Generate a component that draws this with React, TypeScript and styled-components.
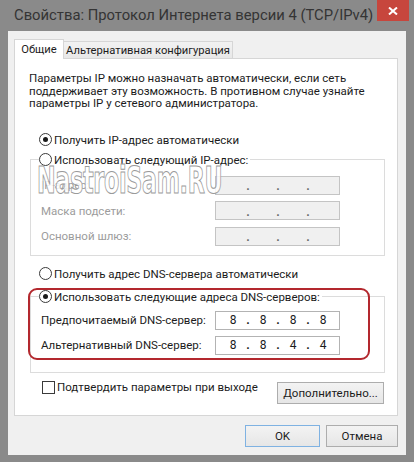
import React from "react";
import styled, { createGlobalStyle } from "styled-components";

const GlobalStyle = createGlobalStyle`
  html, body {
    margin: 0;
    padding: 0;
    background: #8a8a8a;
  }
  body {
    font-family: Roboto, "Noto Sans", sans-serif;
  }
`;

const Window = styled.div`
  width: 414px;
  height: 462px;
  background: #8a8a8a;
  display: flex;
  flex-direction: column;
  overflow: hidden;
`;

const TitleBar = styled.div`
  height: 31px;
  flex-shrink: 0;
  display: flex;
  justify-content: space-between;
  align-items: flex-start;
  padding: 0 5px 0 14px;
`;

const Title = styled.div`
  font-size: 14.8px;
  line-height: 31px;
  color: #343434;
  white-space: nowrap;
`;

const CloseButton = styled.div`
  width: 32px;
  height: 21px;
  background: #c7463d;
  display: flex;
  align-items: center;
  justify-content: center;
`;

const Client = styled.div`
  margin: 0 8px;
  height: 424px;
  box-sizing: border-box;
  background: #f0f0f0;
  padding: 8px 8px 0 6px;
  display: flex;
  flex-direction: column;
  font-size: 11.5px;
  color: #1c1c1c;
`;

const TabStrip = styled.div`
  height: 19px;
  display: flex;
  align-items: flex-end;
`;

const Tab = styled.div<{ $active?: boolean; $width: number }>`
  box-sizing: border-box;
  width: ${(p) => p.$width}px;
  height: ${(p) => (p.$active ? "20px" : "17px")};
  margin-bottom: ${(p) => (p.$active ? "-1px" : "0")};
  background: ${(p) => (p.$active ? "#ffffff" : "linear-gradient(#f2f2f2, #e8e8e8)")};
  border: 1px solid #d6d6d6;
  border-bottom: none;
  border-left: ${(p) => (p.$active ? "1px solid #d6d6d6" : "none")};
  font-size: 11.2px;
  display: flex;
  align-items: center;
  justify-content: center;
  position: relative;
  z-index: ${(p) => (p.$active ? 1 : 0)};
  white-space: nowrap;
`;

const Panel = styled.div`
  position: relative;
  height: 358px;
  box-sizing: border-box;
  background: #ffffff;
  border: 1px solid #d6d6d6;
  padding: 13px 12px 0 0;
  display: flex;
  flex-direction: column;
`;

const Description = styled.p`
  margin: 0 0 0 14px;
  line-height: 12.5px;
`;

const RadioRow = styled.label<{ $top?: number }>`
  height: 20px;
  display: flex;
  align-items: center;
  gap: 2px;
  margin: ${(p) => p.$top ?? 0}px 0 0 24px;
  white-space: nowrap;
`;

const RadioCircle = styled.span<{ $checked?: boolean }>`
  width: 13px;
  height: 13px;
  box-sizing: border-box;
  border-radius: 50%;
  border: 1px solid #3a3a3a;
  background: #fff;
  display: flex;
  align-items: center;
  justify-content: center;
  &::after {
    content: "";
    width: 5px;
    height: 5px;
    border-radius: 50%;
    background: ${(p) => (p.$checked ? "#1a1a1a" : "transparent")};
  }
`;

const GroupBox = styled.fieldset<{ $top?: number; $bottom: number }>`
  margin: ${(p) => p.$top ?? 0}px 0 0 15px;
  border: 1px solid #dcdcdc;
  padding: 0 44px ${(p) => p.$bottom}px 10px;
  min-width: 0;
`;

const Legend = styled.legend`
  padding: 0 2px 0 0;
  margin-left: -2px;
  & > label {
    margin: 0;
  }
`;

const FieldRows = styled.div<{ $top: number; $gap: number }>`
  padding-top: ${(p) => p.$top}px;
  display: flex;
  flex-direction: column;
  gap: ${(p) => p.$gap}px;
`;

const FieldRow = styled.div`
  height: 19px;
  display: flex;
  justify-content: space-between;
  align-items: center;
`;

const FieldLabel = styled.span<{ $disabled?: boolean }>`
  color: ${(p) => (p.$disabled ? "#9c9c9c" : "#1c1c1c")};
  white-space: nowrap;
`;

const IpBox = styled.div<{ $disabled?: boolean }>`
  width: 125px;
  height: 19px;
  box-sizing: border-box;
  border: 1px solid ${(p) => (p.$disabled ? "#c4c4c4" : "#b3b3b3")};
  background: ${(p) => (p.$disabled ? "#f0f0f0" : "#ffffff")};
  padding-left: 4px;
  display: flex;
  align-items: center;
  font-size: 12px;
  color: ${(p) => (p.$disabled ? "#6a6a6a" : "#1c1c1c")};
`;

const Octet = styled.span`
  width: 26px;
  text-align: center;
`;

const Dot = styled.span<{ $disabled?: boolean }>`
  width: 4px;
  text-align: center;
  font-weight: bold;
  position: relative;
  top: ${(p) => (p.$disabled ? "1px" : "0")};
`;

const BottomRow = styled.div`
  margin-top: 8px;
  display: flex;
  justify-content: space-between;
  align-items: flex-start;
  padding: 0 1px 0 27px;
`;

const CheckLabel = styled.label`
  height: 13px;
  display: flex;
  align-items: center;
  gap: 2px;
  white-space: nowrap;
`;

const CheckBox = styled.span`
  width: 13px;
  height: 13px;
  box-sizing: border-box;
  border: 1px solid #3a3a3a;
  background: #fff;
`;

const Button = styled.div<{ $width: number; $default?: boolean }>`
  width: ${(p) => p.$width}px;
  height: 22px;
  box-sizing: border-box;
  border: 1px solid ${(p) => (p.$default ? "#7fb2e2" : "#adadad")};
  background: linear-gradient(#f3f3f3, #e6e6e6);
  display: flex;
  align-items: center;
  justify-content: center;
  white-space: nowrap;
`;

const MoreButton = styled(Button)`
  margin-top: 1px;
`;

const DialogButtons = styled.div`
  margin-top: 9px;
  display: flex;
  justify-content: flex-end;
  gap: 6px;
`;

const Highlight = styled.div`
  position: absolute;
  left: 13px;
  top: 229px;
  width: 342px;
  height: 72px;
  box-sizing: border-box;
  border: 2px solid #b3282e;
  border-radius: 9px;
  pointer-events: none;
`;

const Watermark = styled.div`
  position: absolute;
  left: 22px;
  top: 103px;
  font-family: "Liberation Sans Narrow", "DejaVu Sans Condensed", "Liberation Sans", sans-serif;
  font-weight: bold;
  font-size: 37px;
  line-height: 37px;
  color: rgba(255, 255, 255, 0.85);
  -webkit-text-stroke: 1px #9a9a9a;
  letter-spacing: -0.5px;
  transform-origin: left top;
  transform: scaleX(0.67);
  pointer-events: none;
  white-space: nowrap;
`;

const IpField = ({ values, disabled }: { values?: string[]; disabled?: boolean }) => {
  const parts = values ?? ["", "", "", ""];
  return (
    <IpBox $disabled={disabled}>
      {parts.map((v, i) => (
        <React.Fragment key={i}>
          <Octet>{v}</Octet>
          {i < 3 && <Dot $disabled={disabled}>.</Dot>}
        </React.Fragment>
      ))}
    </IpBox>
  );
};

const App = () => {
  return (
    <Window>
      <GlobalStyle />
      <TitleBar>
        <Title>Свойства: Протокол Интернета версии 4 (TCP/IPv4)</Title>
        <CloseButton>
          <svg width="10" height="8" viewBox="0 0 10 8">
            <path d="M1 0.5 L9 7.5 M9 0.5 L1 7.5" stroke="#fff" strokeWidth="2" />
          </svg>
        </CloseButton>
      </TitleBar>
      <Client>
        <TabStrip>
          <Tab $active $width={50}>
            Общие
          </Tab>
          <Tab $width={169}>Альтернативная конфигурация</Tab>
        </TabStrip>
        <Panel>
          <Description>
            Параметры IP можно назначать автоматически, если сеть
            <br />
            поддерживает эту возможность. В противном случае узнайте
            <br />
            параметры IP у сетевого администратора.
          </Description>

          <RadioRow $top={20}>
            <RadioCircle $checked />
            Получить IP-адрес автоматически
          </RadioRow>

          <GroupBox $bottom={9}>
            <Legend>
              <RadioRow>
                <RadioCircle />
                Использовать следующий IP-адрес:
              </RadioRow>
            </Legend>
            <FieldRows $top={6} $gap={6.5}>
              <FieldRow>
                <FieldLabel $disabled>IP-адрес:</FieldLabel>
                <IpField disabled />
              </FieldRow>
              <FieldRow>
                <FieldLabel $disabled>Маска подсети:</FieldLabel>
                <IpField disabled />
              </FieldRow>
              <FieldRow>
                <FieldLabel $disabled>Основной шлюз:</FieldLabel>
                <IpField disabled />
              </FieldRow>
            </FieldRows>
          </GroupBox>

          <RadioRow $top={8}>
            <RadioCircle />
            Получить адрес DNS-сервера автоматически
          </RadioRow>

          <GroupBox $top={3} $bottom={17}>
            <Legend>
              <RadioRow>
                <RadioCircle $checked />
                Использовать следующие адреса DNS-серверов:
              </RadioRow>
            </Legend>
            <FieldRows $top={4} $gap={6}>
              <FieldRow>
                <FieldLabel>Предпочитаемый DNS-сервер:</FieldLabel>
                <IpField values={["8", "8", "8", "8"]} />
              </FieldRow>
              <FieldRow>
                <FieldLabel>Альтернативный DNS-сервер:</FieldLabel>
                <IpField values={["8", "8", "4", "4"]} />
              </FieldRow>
            </FieldRows>
          </GroupBox>

          <BottomRow>
            <CheckLabel>
              <CheckBox />
              Подтвердить параметры при выходе
            </CheckLabel>
            <MoreButton $width={107}>Дополнительно...</MoreButton>
          </BottomRow>

          <Watermark>NastroiSam.RU</Watermark>
          <Highlight />
        </Panel>
        <DialogButtons>
          <Button $width={75} $default>
            OK
          </Button>
          <Button $width={72}>Отмена</Button>
        </DialogButtons>
      </Client>
    </Window>
  );
};

export default App;
